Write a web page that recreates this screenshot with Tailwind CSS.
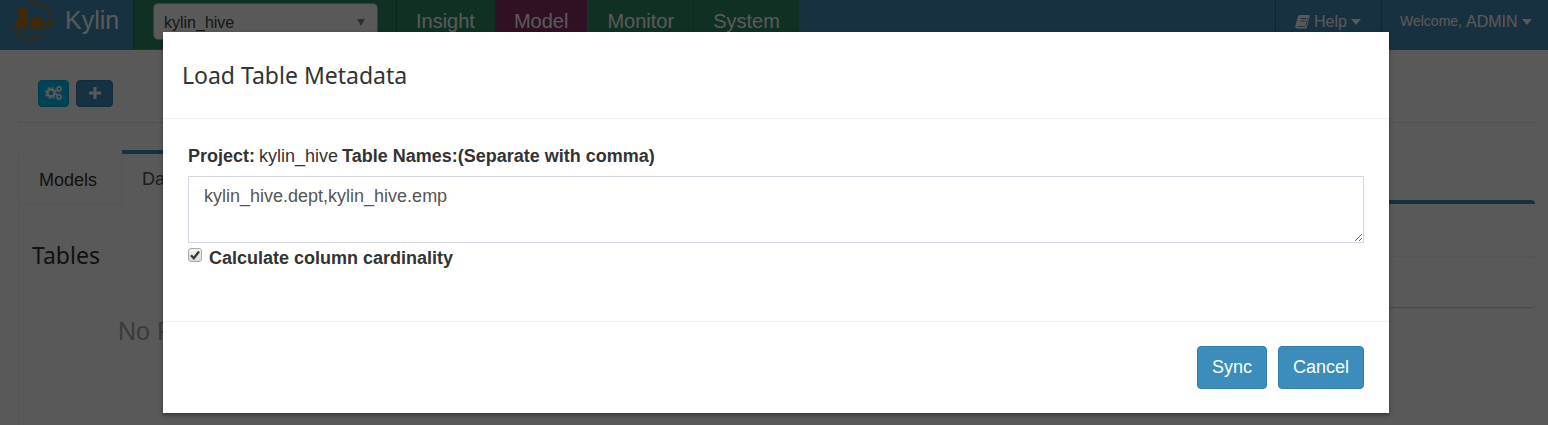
<!DOCTYPE html>
<html lang="en">
<head>
    <meta charset="UTF-8">
    <meta name="viewport" content="width=device-width, initial-scale=1.0">
    <title>Kylin</title>
    <script src="https://cdn.jsdelivr.net/npm/@tailwindcss/browser@4"></script>
</head>
<body class="min-h-screen overflow-hidden bg-white font-['Liberation_Sans',Arial,sans-serif] text-[18px] text-[#333]">
    <header class="flex h-[50px] bg-[#438eb9] text-white">
        <a href="#" class="flex w-[133px] shrink-0 items-center gap-[11px] pb-2 pl-3 text-[25px]">
            <svg class="h-10 w-[42px] shrink-0" viewBox="34 6 126 120" fill="none" stroke="#c8720c" stroke-linecap="round" stroke-linejoin="round">
                <path d="M86 12C119 8 148 24 153 52" stroke-width="4"/>
                <path d="M52 98C64 124 103 128 126 107" stroke-width="4"/>
                <path d="M50 33L57 24L61 30L70 21L71 29L78 28L76 36L82 40L77 45L83 51L77 55L82 62L76 66L84 72L80 78L74 74L70 80L82 88L82 92L66 92L64 82L57 80L50 93L36 93L37 88L44 87L52 77L44 70L50 61L60 54L54 49L60 47L58 43L48 43Z" fill="#c8720c" stroke-width="1"/>
                <path d="M88 68C94 54 114 52 123 62L126 76L116 77L120 86L130 88V92H112L108 78L99 78L106 87V92H90L92 84L86 76L96 70Z" fill="#c8720c" stroke-width="1"/>
                <path d="M124 70C136 84 156 84 157 71C157 61 145 60 143 68" stroke-width="5"/>
                <path d="M62 62L70 66L62 72M98 66L104 70M60 36H66" stroke="#438eb9" stroke-width="3"/>
            </svg>
            <span>Kylin</span>
        </a>
        <nav class="flex h-[49px] bg-[#2e8965] text-[20px]">
            <div class="flex w-[264px] border-x border-[#22704f] pt-[3px] pl-[19px]">
                <button type="button" class="flex h-[37px] w-[225px] items-center justify-between rounded-[5px] border border-[#aaa] bg-white px-[10px] pt-[2px] text-[16px] text-[#444]">
                    kylin_hive
                    <svg class="h-2 w-3" viewBox="0 0 12 8" fill="#888"><path d="M2 0h8L6 7z"/></svg>
                </button>
            </div>
            <a href="#" class="flex items-center border-r border-[#2c7f6b] px-[19px] pb-2">Insight</a>
            <a href="#" class="flex items-center border-r border-[#438eb9] bg-[#892e65] px-[19px] pb-2">Model</a>
            <a href="#" class="flex items-center border-r border-[#2a7d5c] px-[19px] pb-2">Monitor</a>
            <a href="#" class="flex items-center border-r border-[#438eb9] px-[19px] pb-2">System</a>
        </nav>
        <div class="ml-auto flex">
            <a href="#" class="flex w-[106px] items-center gap-1 border-l border-[#2c6a8c] pb-[7px] pl-[19px] text-[16px]">
                <svg class="h-4 w-[15px]" viewBox="0 0 15 16" fill="none">
                    <path d="M5 1H14Q15 1 14.700 2.200L12 13Q11.700 14.500 10 14.500H2Q0 14.500 .3 12L3 2.500Q3.500 1 5 1z" fill="#fff"/>
                    <path d="M6 4.500h5M5.500 7h5" stroke="#438eb9"/>
                    <path d="M2 12.500h7.500Q10.500 12.500 10.800 11.500L13 3.500" stroke="#438eb9" stroke-width=".8"/>
                </svg>
                Help
                <svg class="h-[6px] w-[10px]" viewBox="0 0 10 6" fill="#fff"><path d="M0 0h10L5 6z"/></svg>
            </a>
            <a href="#" class="flex w-[167px] items-center gap-1 border-l border-[#2c6a8c] pb-[7px] pl-[18px] text-[16px]">
                <span class="text-[14px]">Welcome,</span>
                ADMIN
                <svg class="h-[6px] w-[10px]" viewBox="0 0 10 6" fill="#fff"><path d="M0 0h10L5 6z"/></svg>
            </a>
        </div>
    </header>

    <main class="px-[18px] pr-[13px] pt-[30px]">
        <div class="flex h-[43px] gap-[7px] border-b border-dotted border-[#ccc] pl-5">
            <button type="button" aria-label="Settings" class="flex h-[27px] w-[31px] items-center justify-center rounded-[4px] border border-[#00acd6] bg-[#00c0ef] pb-[2px]">
                <svg class="h-4 w-[18px]" viewBox="0 0 18 16" fill="none" stroke="#fff">
                    <circle cx="6" cy="8" r="3.500" stroke-width="2.500"/>
                    <circle cx="6" cy="8" r="5.300" stroke-width="1.600" stroke-dasharray="2.080 2.080"/>
                    <circle cx="14" cy="4" r="1.900" stroke-width="1.500"/>
                    <circle cx="14" cy="4" r="3" stroke-width="1" stroke-dasharray="1.180 1.180"/>
                    <circle cx="14" cy="12" r="1.900" stroke-width="1.500"/>
                    <circle cx="14" cy="12" r="3" stroke-width="1" stroke-dasharray="1.180 1.180"/>
                </svg>
            </button>
            <button type="button" aria-label="Add" class="flex h-[27px] w-[37px] items-center justify-center rounded-[4px] border border-[#367fa9] bg-[#3c8dbc] pb-[2px]">
                <svg class="h-3 w-3" viewBox="0 0 12 12" fill="#fff"><path d="M4.500 0h3v4.500H12v3H7.500V12h-3V7.500H0v-3h4.500z"/></svg>
            </button>
        </div>

        <div class="mt-[27px] flex h-[54px]">
            <a href="#" class="mt-1 flex w-[104px] items-center border-x border-b border-[#f0f0f0] pt-[3px] pl-5">Models</a>
            <a href="#" class="flex w-[140px] items-center border-t-4 border-[#3c8dbc] pl-5 text-[#555]">Data Source</a>
        </div>
        <div class="flex h-[221px] border-l border-[#f4f4f4]">
            <section class="w-[380px] pt-[33px] pl-[13px]">
                <h3 class="font-['Noto_Sans',sans-serif] text-[23px] leading-[36px]">Tables</h3>
                <p class="mt-11 pl-[86px] text-[25px] leading-7 text-[#aaa]">No Result.</p>
            </section>
            <section class="-mt-1 h-[107px] flex-1 rounded-[4px] border-t-4 border-[#3c8dbc] shadow-[0_1px_1px_rgba(0,0,0,0.2)]">
                <div class="h-[53px] border-b border-[#f4f4f4]"></div>
            </section>
        </div>
    </main>

    <!-- modal over the page -->
    <div class="absolute inset-0 flex items-start justify-center overflow-hidden bg-black/65 pt-8 pl-1">
        <form role="dialog" aria-labelledby="modal-title" class="w-full max-w-[1226px] bg-white shadow-[0_2px_4px_rgba(0,0,0,0.4)]">
            <div class="border-b border-[#f0f0f0] px-[19px] py-6">
                <h4 id="modal-title" class="font-['Noto_Sans',sans-serif] text-[23px] leading-[38px]">Load Table Metadata</h4>
            </div>
            <div class="px-[25px] pt-[25px] pb-[50px]">
                <div class="flex gap-1 leading-[25px]">
                    <b>Project:</b>
                    <span>kylin_hive</span>
                    <label for="tables" class="font-bold">Table Names:(Separate with comma)</label>
                </div>
                <textarea id="tables" class="mt-[7px] block h-[67px] w-full resize-y border border-[#d2d6de] px-[15px] py-[7px] leading-[25px] text-[#555]">kylin_hive.dept,kylin_hive.emp</textarea>
                <label class="mt-[3px] flex gap-[7px] font-bold leading-[25px]">
                    <span class="mt-[2px] grid h-[14px] w-[14px]">
                        <input type="checkbox" checked class="col-start-1 row-start-1 h-[14px] w-[14px] appearance-none rounded-[3px] border border-[#aaa] bg-linear-to-b from-[#f2f2f2] to-[#ddd]">
                        <svg class="pointer-events-none col-start-1 row-start-1 h-[14px] w-[14px]" viewBox="0 0 14 14" fill="none" stroke="#3a3a3a" stroke-width="2.400"><path d="M3 7.200l2.800 3L11 3.500"/></svg>
                    </span>
                    Calculate column cardinality
                </label>
            </div>
            <div class="flex justify-end gap-[11px] border-t border-[#f0f0f0] px-[25px] py-6">
                <button type="submit" class="h-[43px] rounded-[4px] border border-[#367fa9] bg-[#3c8dbc] px-[14px] text-white">Sync</button>
                <button type="button" class="h-[43px] rounded-[4px] border border-[#367fa9] bg-[#3c8dbc] px-[14px] text-white">Cancel</button>
            </div>
        </form>
    </div>
</body>
</html>
